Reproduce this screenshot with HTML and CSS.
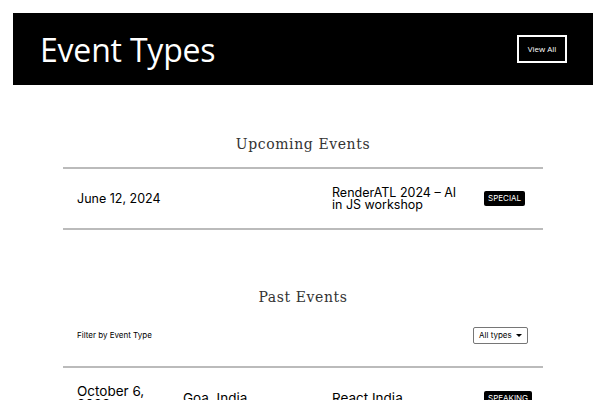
FILE: index.html
```html
<!DOCTYPE html>
<html lang="en">
<head>
  <meta charset="UTF-8">
  <title>Event Types</title>
  <link rel="stylesheet" href="styles.css">
</head>
<body>
<header class="hero">
  <h1>Event Types</h1>
  <a class="view-all" href="#">View All</a>
</header>

<main class="events">
  <section class="block">
    <h2>Upcoming Events</h2>
    <ul class="list">
      <li class="row">
        <span class="date">June 12, 2024</span>
        <span class="place"></span>
        <span class="title">RenderATL 2024 – AI in JS workshop</span>
        <span class="tag">SPECIAL</span>
      </li>
    </ul>
  </section>

  <section class="block past">
    <h2>Past Events</h2>
    <div class="filter">
      <label for="type">Filter by Event Type</label>
      <div class="select">All types <span class="caret"></span></div>
    </div>
    <ul class="list">
      <li class="row tall">
        <span class="date">October 6, 2023</span>
        <span class="place">Goa, India</span>
        <span class="title">React India</span>
        <span class="tag">SPEAKING</span>
      </li>
    </ul>
  </section>
</main>
</body>
</html>
```

FILE: styles.css
```css
* {
  margin: 0;
  padding: 0;
  box-sizing: border-box;
}

body {
  padding: 13px 7px 0 13px;
  font-family: Inter, "Liberation Sans", sans-serif;
  color: #000;
  background: #fff;
}

.hero {
  display: flex;
  align-items: center;
  justify-content: space-between;
  height: 72px;
  padding: 0 26px 0 27px;
  background: #000;
}

.hero h1 {
  font-family: "Open Sans", sans-serif;
  font-weight: 400;
  font-size: 32px;
  color: #fff;
  letter-spacing: -0.2px;
}

.view-all {
  display: block;
  width: 50px;
  height: 28px;
  line-height: 24px;
  border: 2px solid #fff;
  color: #fff;
  font-family: "Open Sans", sans-serif;
  font-size: 8px;
  text-align: center;
  text-decoration: none;
}

.events {
  width: 480px;
  margin: 0 0 0 50px;
}

.block {
  padding-top: 51px;
}

.past {
  padding-top: 59px;
}

.block h2 {
  font-family: "DejaVu Serif", serif;
  font-weight: 400;
  font-size: 14px;
  color: #333;
  text-align: center;
  letter-spacing: 0.6px;
  padding-bottom: 15px;
}

.list {
  list-style: none;
  border-top: 2px solid #bbb;
}

.row {
  display: grid;
  grid-template-columns: 106px 149px 152px 1fr;
  align-items: center;
  height: 61px;
  padding-left: 14px;
  border-bottom: 2px solid #bbb;
  font-size: 12.5px;
  line-height: 12px;
}

.tall {
  height: 62px;
  font-size: 13.5px;
  line-height: 13px;
}

.date {
  padding-right: 20px;
}

.title {
  padding-right: 14px;
}

.tag {
  justify-self: start;
  background: #000;
  color: #fff;
  font-size: 8px;
  line-height: 15px;
  padding: 0 4px;
  border-radius: 2px;
}

.filter {
  display: flex;
  align-items: center;
  justify-content: space-between;
  height: 42px;
  padding: 0 15px 0 14px;
  margin-top: -6px;
  margin-bottom: 10px;
  font-size: 8px;
}

.select {
  display: flex;
  align-items: center;
  justify-content: space-between;
  width: 55px;
  height: 17px;
  padding: 0 5px;
  border: 1px solid #767676;
  border-radius: 2px;
  font-size: 8px;
  white-space: nowrap;
}

.caret {
  width: 0;
  height: 0;
  border-left: 3px solid transparent;
  border-right: 3px solid transparent;
  border-top: 3px solid #000;
}
```
